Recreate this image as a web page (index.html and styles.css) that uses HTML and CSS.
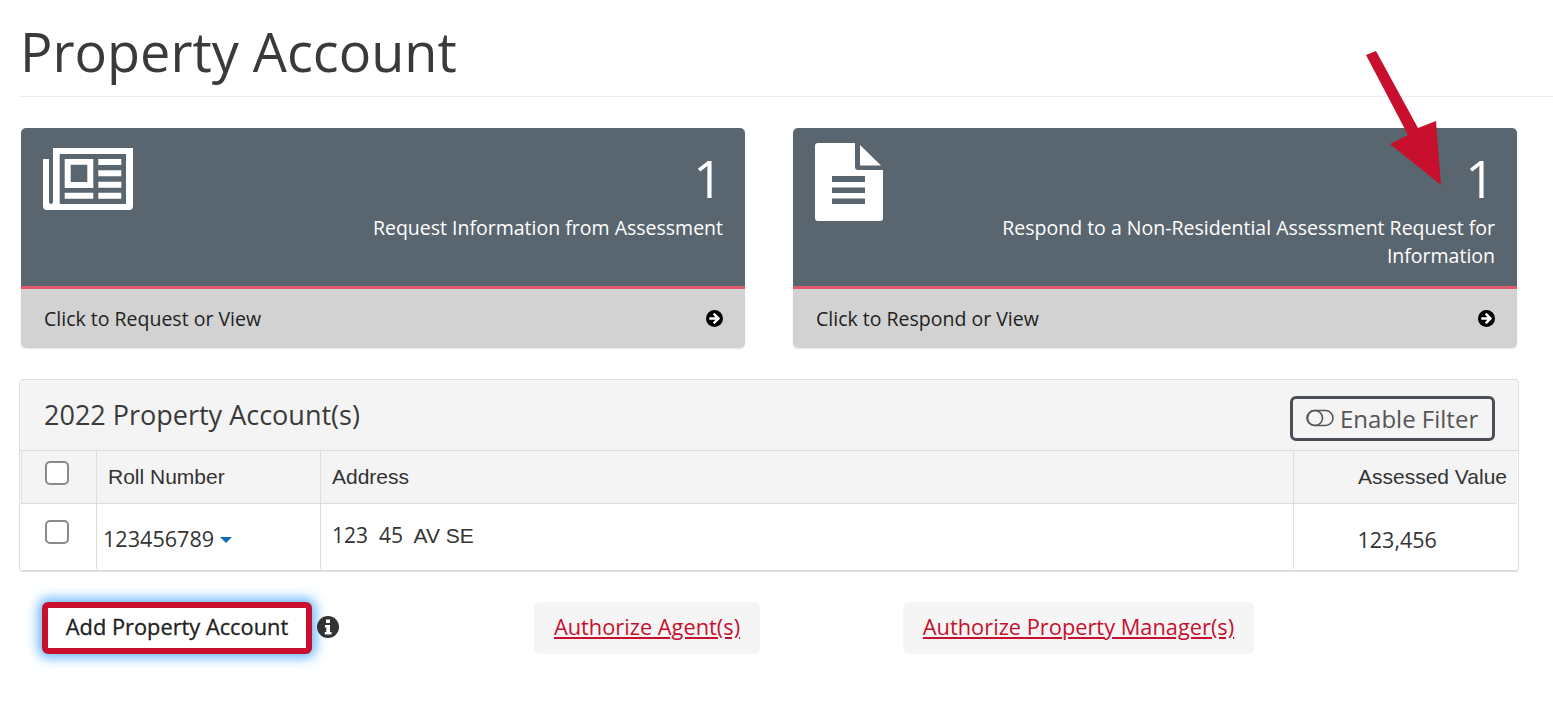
FILE: index.html
```html
<!DOCTYPE html>
<html lang="en">
<head>
    <meta charset="UTF-8">
    <meta name="viewport" content="width=device-width, initial-scale=1.0">
    <title>Property Account</title>
    <link rel="stylesheet" href="styles.css">
</head>
<body>
    <h1 class="page-title">Property Account</h1>

    <div class="cards">
        <a class="card" href="#">
            <div class="card-top">
                <svg class="card-icon icon-news" viewBox="0 0 90 62">
                    <path fill-rule="evenodd" d="M10 0H90V58Q90 62 86 62H4Q0 62 0 58V11H10ZM6 11V54Q6 56 8 56Q10 56 10 54V11ZM16.7 6V56H83V6ZM21.7 11H50.3V40H21.7ZM27.7 16.7V34H44.3V16.7ZM55.3 11H78.3V17H55.3ZM55.3 22.3H78.3V28.3H55.3ZM55.3 33.7H78.3V39.7H55.3ZM55.3 44.7H78.3V50.7H55.3ZM21.7 44.7H50.3V50.7H21.7Z"/>
                </svg>
                <div class="card-info">
                    <div class="card-count">1</div>
                    <div class="card-label">Request Information from Assessment</div>
                </div>
            </div>
            <div class="card-foot">
                <span>Click to Request or View</span>
                <svg class="go-icon" viewBox="0 0 18 18">
                    <circle cx="9" cy="9" r="9"/>
                    <path class="go-arrow" d="M9 3L15 9L9 15L7.2 13.2L10 10.3H3.5V7.7H10L7.2 4.8Z"/>
                </svg>
            </div>
        </a>
        <a class="card" href="#">
            <div class="card-top">
                <svg class="card-icon icon-doc" viewBox="0 0 68 78">
                    <path fill-rule="evenodd" d="M3 0H40V24Q40 27 43 27H68V75Q68 78 65 78H3Q0 78 0 75V3Q0 0 3 0ZM17 33V39H50V33ZM17 44.5V50H50V44.5ZM17 55.5V61H50V55.5Z"/>
                    <path d="M45 2L66 22.6H45Z"/>
                </svg>
                <div class="card-info">
                    <div class="card-count">1</div>
                    <div class="card-label">Respond to a Non-Residential Assessment Request for Information</div>
                </div>
            </div>
            <div class="card-foot">
                <span>Click to Respond or View</span>
                <svg class="go-icon" viewBox="0 0 18 18">
                    <circle cx="9" cy="9" r="9"/>
                    <path class="go-arrow" d="M9 3L15 9L9 15L7.2 13.2L10 10.3H3.5V7.7H10L7.2 4.8Z"/>
                </svg>
            </div>
        </a>
    </div>

    <div class="accounts">
        <div class="accounts-head">
            <h2>2022 Property Account(s)</h2>
            <button class="filter-btn" type="button">
                <svg class="toggle-icon" viewBox="0 0 28 18">
                    <rect x="1" y="1.5" width="26" height="15" rx="7.5"/>
                    <circle cx="9" cy="9" r="7.5"/>
                </svg>
                Enable Filter
            </button>
        </div>
        <table class="accounts-table">
            <colgroup>
                <col class="col-check">
                <col class="col-roll">
                <col>
                <col class="col-value">
            </colgroup>
            <thead>
                <tr>
                    <th><span class="check"></span></th>
                    <th>Roll Number</th>
                    <th>Address</th>
                    <th class="th-value">Assessed Value</th>
                </tr>
            </thead>
            <tbody>
                <tr>
                    <td><span class="check"></span></td>
                    <td class="roll">123456789 <span class="caret"></span></td>
                    <td class="address"><span class="open">123&nbsp; 45</span>&nbsp; AV SE</td>
                    <td class="value">123,456</td>
                </tr>
            </tbody>
        </table>
    </div>

    <div class="actions">
        <button class="btn-add" type="button">Add Property Account</button>
        <svg class="info-icon" viewBox="0 0 22 22">
            <circle cx="11" cy="11" r="11"/>
            <path class="info-i" d="M9 3.5H13V7H9ZM8 9H13V16H14.5V18.5H7.8V16H9.3V11.5H8Z"/>
        </svg>
        <a class="link-box link-agent" href="#">Authorize Agent(s)</a>
        <a class="link-box link-manager" href="#">Authorize Property Manager(s)</a>
    </div>

    <svg class="callout-arrow" viewBox="0 0 76 137">
        <path d="M1 7L11 3L53 80L71 73L76 137L25 96L43 87Z"/>
    </svg>
</body>
</html>
```

FILE: styles.css
```css
* {
    box-sizing: border-box;
}

body {
    margin: 0;
    min-height: 100vh;
    font-family: "Open Sans", sans-serif;
    color: #333;
    background: #fff;
}

.page-title {
    margin: 0 0 0 19px;
    height: 97px;
    padding: 15px 0 0 1px;
    font-size: 54px;
    line-height: 73px;
    font-weight: 400;
    color: #3a3a3a;
    border-bottom: 1px solid #eee;
}

.cards {
    display: grid;
    grid-template-columns: 724px 724px;
    gap: 48px;
    margin: 31px 0 0 21px;
}

.card {
    display: block;
    height: 220px;
    border-radius: 5px;
    overflow: hidden;
    text-decoration: none;
    box-shadow: 0 1px 2px rgba(0,0,0,0.1);
}

.card-top {
    display: flex;
    justify-content: space-between;
    height: 161px;
    padding: 15px 22px 0 22px;
    background: #5a666f;
    border-bottom: 3px solid #e25a6c;
    color: #fff;
}

.card-icon {
    flex: none;
    fill: #fff;
}

.icon-news {
    width: 90px;
    height: 62px;
    margin-top: 5px;
}

.icon-doc {
    width: 68px;
    height: 78px;
}

.card-info {
    flex: 1;
    text-align: right;
}

.card-count {
    font-size: 52px;
    font-weight: 400;
    line-height: 70px;
}

.card-label {
    font-size: 19.5px;
    line-height: 28px;
    margin-top: 1px;
    padding-left: 50px;
}

.card-foot {
    display: flex;
    justify-content: space-between;
    align-items: center;
    height: 59px;
    padding: 0 22px 0 23px;
    background: #d2d2d2;
    color: #222;
    font-size: 19.5px;
}

.go-icon {
    width: 17px;
    height: 17px;
    fill: #000;
}

.go-arrow {
    fill: #fff;
}

.accounts {
    margin: 31px 0 0 19px;
    width: 1500px;
    height: 193px;
    border: 1px solid #ddd;
    border-bottom-width: 2px;
    border-radius: 4px;
}

.accounts-head {
    display: flex;
    justify-content: space-between;
    align-items: flex-start;
    height: 71px;
    padding: 16px 23px 0 24px;
    background: #f4f4f4;
    border-bottom: 1px solid #ddd;
}

.accounts-head h2 {
    margin: 0;
    font-size: 27px;
    line-height: 37px;
    font-weight: 400;
    color: #3a3a3a;
}

.filter-btn {
    display: flex;
    align-items: center;
    gap: 6px;
    width: 205px;
    height: 45px;
    padding: 0 0 1px 13px;
    background: transparent;
    border: 3px solid #4a4f57;
    border-radius: 6px;
    font-family: inherit;
    font-size: 24px;
    color: #555;
}

.toggle-icon {
    width: 28px;
    height: 18px;
    fill: none;
    stroke: #555;
    stroke-width: 1.6;
}

.accounts-table {
    width: 1496px;
    margin-left: 1px;
    border-collapse: collapse;
    table-layout: fixed;
    font-family: "Liberation Sans", sans-serif;
    font-size: 21px;
    color: #333;
}

.col-check {
    width: 75px;
}

.col-roll {
    width: 224px;
}

.col-value {
    width: 224px;
}

.accounts-table th {
    height: 52px;
    padding: 1px 11px 0;
    background: #f4f4f4;
    font-weight: 400;
    text-align: left;
    border: 1px solid #ddd;
    border-top: 0;
}

.accounts-table td {
    height: 66px;
    padding: 0 11px;
    border: 1px solid #ddd;
    border-top: 0;
    border-bottom: 0;
}

.accounts-table tr > :last-child {
    border-right: 0;
}

.accounts-table td:first-child {
    border-left: 0;
}

.accounts-table .th-value {
    text-align: right;
    padding-right: 10px;
}

.check {
    display: block;
    width: 24px;
    height: 24px;
    margin: -8px 0 0 12px;
    background: #fff;
    border: 2px solid #8a8a8a;
    border-radius: 5px;
}

.roll {
    font-family: "Open Sans", sans-serif;
    font-size: 21.6px;
    padding-left: 6px !important;
    padding-top: 4px !important;
}

.caret {
    display: inline-block;
    width: 0;
    height: 0;
    margin: 0 0 2px 0;
    vertical-align: middle;
    border-top: 6px solid #0a6ebd;
    border-left: 6px solid transparent;
    border-right: 6px solid transparent;
}

.address {
    padding-bottom: 2px !important;
}

.open,
.value {
    font-family: "Open Sans", sans-serif;
}

.value {
    font-size: 21.5px;
    padding: 6px 0 0 64px !important;
}

.actions {
    display: flex;
    align-items: center;
    margin: 30px 0 0 42px;
    height: 52px;
}

.btn-add {
    width: 270px;
    height: 52px;
    padding: 0 0 4px;
    background: #fff;
    border: 6px solid #c8102e;
    border-radius: 6px;
    box-shadow: 0 0 12px 4px #6bb8fb;
    font-family: inherit;
    font-size: 21.8px;
    font-weight: 500;
    -webkit-text-stroke: 0.3px #222;
    color: #222;
}

.info-icon {
    width: 22px;
    height: 22px;
    margin: 0 0 2px 5px;
    fill: #333;
}

.info-i {
    fill: #fff;
}

.link-box {
    display: flex;
    align-items: center;
    justify-content: center;
    height: 52px;
    padding-bottom: 4px;
    background: #f5f5f5;
    border-radius: 6px;
    color: #c8102e;
    font-size: 21.8px;
}

.link-agent {
    width: 226px;
    margin-left: 195px;
}

.link-manager {
    width: 351px;
    margin-left: 143px;
}

.callout-arrow {
    position: absolute;
    left: 1365px;
    top: 48px;
    width: 76px;
    height: 137px;
    fill: #c8102e;
}
```
